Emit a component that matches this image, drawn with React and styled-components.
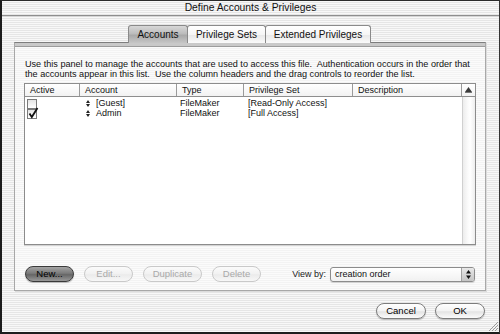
import React from 'react';
import styled, { createGlobalStyle } from 'styled-components';

const GlobalStyle = createGlobalStyle`
  html, body {
    margin: 0;
    padding: 0;
    background: #efefef;
  }
  body {
    font-family: "Liberation Sans", Arial, sans-serif;
    color: #000;
  }
`;

const stripes = 'repeating-linear-gradient(to bottom, #f8f8f8 0px, #f8f8f8 1px, #e6e6e6 1px, #e6e6e6 2px)';
const softStripes = 'repeating-linear-gradient(to bottom, #fbfbfb 0px, #fbfbfb 1px, #f3f3f3 1px, #f3f3f3 2px)';

const Window = styled.div`
  position: relative;
  width: 500px;
  height: 334px;
  box-sizing: border-box;
  border-top: 1px solid #2b2b2b;
  border-left: 2px solid #1c1c1c;
  border-right: 1px solid #333;
  border-bottom: 2px solid #1c1c1c;
  background: ${stripes};
  display: flex;
  flex-direction: column;
`;

const TitleBar = styled.div`
  height: 14px;
  line-height: 13px;
  font-size: 10.3px;
  text-align: center;
  color: #111;
  border-bottom: 1px solid #8e8e8e;
  box-shadow: 0 1px 0 #d6d6d6;
`;

const Body = styled.div`
  flex: 1;
  display: flex;
  flex-direction: column;
  padding: 9px 13px 0 12px;
`;

const TabBar = styled.div`
  display: flex;
  justify-content: center;
  position: relative;
  z-index: 1;
  margin-bottom: -1px;
`;

const Tab = styled.div`
  box-sizing: border-box;
  width: ${p => p.$w}px;
  height: 18px;
  margin-left: -1px;
  text-align: center;
  font-size: 10px;
  line-height: 17px;
  border: 1px solid #8a8a8a;
  border-bottom: none;
  border-radius: 3px 3px 0 0;
  background: ${p => p.$active
    ? 'linear-gradient(to bottom, #d8d8d8 0%, #bcbcbc 45%, #a9a9a9 55%, #c6c6c6 100%)'
    : 'linear-gradient(to bottom, #ffffff 0%, #f6f6f6 50%, #e9e9e9 55%, #fafafa 100%)'};
  color: #111;
`;

const Panel = styled.div`
  display: flex;
  flex-direction: column;
  padding: 16px 9px 8px 9px;
  border: 1px solid #a8a8a8;
  border-top-color: #7e7e7e;
  box-shadow: inset 0 3px 0 #c9c9c9, inset 0 4px 0 #9c9c9c, 1px 1px 0 #dcdcdc;
  background: ${softStripes};
`;

const Description = styled.p`
  margin: 0 0 4px 1px;
  font-size: 9.1px;
  line-height: 10px;
  white-space: pre;
  color: #111;
`;

const Table = styled.div`
  height: 162px;
  box-sizing: border-box;
  border: 1px solid #8c8c8c;
  background: #fff;
  display: flex;
  flex-direction: column;
  box-shadow: 0 1px 0 #d4d4d4;
`;

const columns = '55px 97px 67px 109px 109px';

const HeaderRow = styled.div`
  display: grid;
  grid-template-columns: ${columns} 1fr;
  height: 12px;
  border-bottom: 1px solid #8e8e8e;
  background: linear-gradient(to bottom, #ffffff, #f2f2f2);
`;

const HeaderCell = styled.div`
  border-right: 1px solid #9a9a9a;
  padding-left: 5px;
  font-size: 9px;
  line-height: 12px;
  color: #111;
  display: flex;
  align-items: center;
  &:last-child {
    border-right: none;
    justify-content: center;
    padding-left: 0;
  }
`;

const ListArea = styled.div`
  flex: 1;
  display: flex;
`;

const Rows = styled.div`
  flex: 1;
`;

const ScrollTrack = styled.div`
  width: 12px;
  border-left: 1px solid #d0d0d0;
  background: linear-gradient(to right, #ececec, #fafafa 40%, #ffffff 60%, #eeeeee);
`;

const Row = styled.div`
  display: grid;
  grid-template-columns: ${columns};
  height: 10px;
  font-size: 9px;
  line-height: 10px;
  color: #111;
`;

const Cell = styled.div`
  padding-left: ${p => p.$pad ?? 4}px;
  display: flex;
  align-items: center;
  gap: ${p => p.$gap ?? 0}px;
  white-space: nowrap;
`;

const Box = styled.span`
  position: relative;
  display: inline-block;
  width: 8px;
  height: 8px;
  margin-top: 2px;
  border: 1px solid #7a7a7a;
  background: linear-gradient(to bottom, #e4e4e4, #ffffff);
`;

const Tick = styled.svg`
  position: absolute;
  left: 0px;
  top: -3px;
`;

const Handle = styled.svg`
  flex: none;
`;

const ButtonRow = styled.div`
  display: flex;
  align-items: center;
  gap: 10px;
  margin-top: 21px;
  padding: 0 1px;
`;

const Pill = styled.button`
  box-sizing: border-box;
  min-width: ${p => p.$w ?? 49}px;
  height: 16px;
  padding: 0 8px;
  border-radius: 8px;
  font-family: "Liberation Sans", Arial, sans-serif;
  font-size: 9.5px;
  line-height: 14px;
  cursor: default;
  border: 1px solid ${p => p.$kind === 'default' ? '#3a3a3a' : p.$kind === 'disabled' ? '#c9c9c9' : '#7c7c7c'};
  color: ${p => p.$kind === 'disabled' ? '#a9a9a9' : '#000'};
  background: ${p => p.$kind === 'default'
    ? 'linear-gradient(to bottom, #a4a4a4 0%, #7a7a7a 45%, #666 55%, #999 100%)'
    : p.$kind === 'disabled'
      ? 'linear-gradient(to bottom, #fbfbfb 0%, #f1f1f1 50%, #ebebeb 55%, #f7f7f7 100%)'
      : 'linear-gradient(to bottom, #ffffff 0%, #f3f3f3 50%, #e4e4e4 55%, #fbfbfb 100%)'};
  box-shadow: ${p => p.$kind === 'disabled' ? 'none' : '0 1px 1px rgba(0,0,0,0.25)'};
`;

const ViewBy = styled.div`
  margin-left: auto;
  display: flex;
  align-items: center;
  gap: 4px;
  font-size: 9px;
  color: #222;
`;

const Select = styled.div`
  box-sizing: border-box;
  width: 145px;
  height: 15px;
  display: flex;
  align-items: center;
  border: 1px solid #8c8c8c;
  border-radius: 3px;
  background: linear-gradient(to bottom, #ffffff, #f1f1f1);
  box-shadow: 0 1px 1px rgba(0,0,0,0.15);
  font-size: 9px;
  color: #111;
  padding-left: 4px;
`;

const SelectText = styled.span`
  flex: 1;
`;

const Stepper = styled.div`
  width: 12px;
  height: 13px;
  border-left: 1px solid #a0a0a0;
  border-radius: 0 2px 2px 0;
  background: linear-gradient(to bottom, #e8e8e8, #c4c4c4);
  display: flex;
  align-items: center;
  justify-content: center;
`;

const Footer = styled.div`
  display: flex;
  justify-content: flex-end;
  gap: 9px;
  margin-top: 12px;
  padding-right: 1px;
`;

const Grip = styled.svg`
  position: absolute;
  right: 1px;
  bottom: 1px;
`;

function Check({ checked }) {
  return (
    <Box>
      {checked && (
        <Tick width="11" height="12" viewBox="0 0 11 12">
          <path d="M1.5 6.5 L3.8 10 L9.5 1" stroke="#111" strokeWidth="1.8" fill="none" />
        </Tick>
      )}
    </Box>
  );
}

function DragHandle() {
  return (
    <Handle width="4" height="7" viewBox="0 0 4 7">
      <path d="M2 0 L4 3 L0 3 Z M0 4 L4 4 L2 7 Z" fill="#222" />
    </Handle>
  );
}

const accounts = [
  { active: false, name: '[Guest]', type: 'FileMaker', set: '[Read-Only Access]' },
  { active: true, name: 'Admin', type: 'FileMaker', set: '[Full Access]' },
];

export default function App() {
  return (
    <>
      <GlobalStyle />
      <Window>
        <TitleBar>Define Accounts &amp; Privileges</TitleBar>
        <Body>
          <TabBar>
            <Tab $active $w={60}>Accounts</Tab>
            <Tab $w={79}>Privilege Sets</Tab>
            <Tab $w={106}>Extended Privileges</Tab>
          </TabBar>
          <Panel>
            <Description>
              {'Use this panel to manage the accounts that are used to access this file.  Authentication occurs in the order that\nthe accounts appear in this list.  Use the column headers and the drag controls to reorder the list.'}
            </Description>
            <Table>
              <HeaderRow>
                <HeaderCell>Active</HeaderCell>
                <HeaderCell>Account</HeaderCell>
                <HeaderCell>Type</HeaderCell>
                <HeaderCell>Privilege Set</HeaderCell>
                <HeaderCell>Description</HeaderCell>
                <HeaderCell>
                  <svg width="7" height="6" viewBox="0 0 7 6">
                    <path d="M3.5 0 L7 5 L0 5 Z" fill="#3a3a3a" />
                    <rect x="0" y="5" width="7" height="1" fill="#777" />
                  </svg>
                </HeaderCell>
              </HeaderRow>
              <ListArea>
                <Rows>
                  {accounts.map(a => (
                    <Row key={a.name}>
                      <Cell $pad={2}><Check checked={a.active} /></Cell>
                      <Cell $pad={6} $gap={6}><DragHandle />{a.name}</Cell>
                      <Cell $pad={3}>{a.type}</Cell>
                      <Cell $pad={4}>{a.set}</Cell>
                      <Cell />
                    </Row>
                  ))}
                </Rows>
                <ScrollTrack />
              </ListArea>
            </Table>
            <ButtonRow>
              <Pill $kind="default">New...</Pill>
              <Pill $kind="disabled">Edit...</Pill>
              <Pill $kind="disabled" $w={59}>Duplicate</Pill>
              <Pill $kind="disabled">Delete</Pill>
              <ViewBy>
                View by:
                <Select>
                  <SelectText>creation order</SelectText>
                  <Stepper>
                    <svg width="5" height="9" viewBox="0 0 5 9">
                      <path d="M2.5 0 L5 3.5 L0 3.5 Z M0 5.5 L5 5.5 L2.5 9 Z" fill="#111" />
                    </svg>
                  </Stepper>
                </Select>
              </ViewBy>
            </ButtonRow>
          </Panel>
          <Footer>
            <Pill $w={50}>Cancel</Pill>
            <Pill $w={50}>OK</Pill>
          </Footer>
        </Body>
        <Grip width="10" height="10" viewBox="0 0 10 10">
          <path d="M10 1 L1 10 M10 4 L4 10 M10 7 L7 10" stroke="#9a9a9a" strokeWidth="1" />
        </Grip>
      </Window>
    </>
  );
}
